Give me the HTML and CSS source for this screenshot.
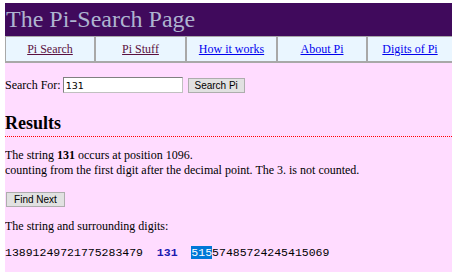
FILE: index.html
```html
<!DOCTYPE html>
<html lang="en">
<head>
  <meta charset="UTF-8">
  <title>The Pi-Search Page</title>
  <link rel="stylesheet" href="styles.css">
</head>
<body>
  <div class="page">
    <div class="header">The Pi-Search Page</div>

    <div class="nav">
      <div class="nav-cell"><a href="#" class="visited">Pi Search</a></div>
      <div class="nav-cell"><a href="#" class="visited">Pi Stuff</a></div>
      <div class="nav-cell"><a href="#">How it works</a></div>
      <div class="nav-cell"><a href="#">About Pi</a></div>
      <div class="nav-cell"><a href="#">Digits of Pi</a></div>
    </div>

    <form class="search-form">
      <label for="searchInput">Search For:</label>
      <input type="text" id="searchInput" value="131">
      <button type="submit">Search Pi</button>
    </form>

    <h3 class="results-title">Results</h3>

    <p class="result-text">
      The string <b>131</b> occurs at position 1096.<br>
      counting from the first digit after the decimal point. The 3. is not counted.
    </p>

    <div class="next-row">
      <button type="button">Find Next</button>
    </div>

    <p class="surround-label">The string and surrounding digits:</p>

    <pre class="digits">13891249721775283479  <span class="match">131</span>  <span class="sel">515</span>57485724245415069</pre>
  </div>
</body>
</html>
```

FILE: styles.css
```css
html {
  background: white;
}
body {
  margin: 3px 0 0 5px;
  font-family: "Liberation Serif", "Times New Roman", serif;
  font-size: 12px;
  color: #000;
}
.page {
  background: #ffdcff;
  min-height: 280px;
}
.header {
  background: #400a5c;
  color: #aeb4d0;
  font-size: 24px;
  height: 33px;
  line-height: 32px;
  padding-left: 1px;
}
.nav {
  display: grid;
  grid-template-columns: 90px 91px 91px 90px 1fr;
  background: #eaf6ff;
  border-top: 1px solid #a8a8a8;
  border-left: 1px solid #a8a8a8;
  border-bottom: 2px solid #a8a8a8;
}
.nav-cell {
  text-align: center;
  height: 24px;
  line-height: 24px;
  border-right: 2px solid #a8a8a8;
}
.nav-cell:last-child {
  border-right: none;
}
.nav a {
  color: #0000ee;
}
.nav a.visited {
  color: #5a1040;
}
.search-form {
  display: flex;
  align-items: center;
  margin: 14px 0 0;
  height: 16px;
}
.search-form label {
  margin-right: 2px;
}
.search-form input {
  width: 120px;
  height: 16px;
  box-sizing: border-box;
  border: 1px solid #808080;
  border-right-color: #c0c0c0;
  border-bottom-color: #c0c0c0;
  padding: 0 2px;
  font-family: "DejaVu Sans", Verdana, sans-serif;
  font-size: 9.5px;
  margin: 0 5px 0 0;
}
button {
  font-family: "Liberation Sans", Arial, sans-serif;
  font-size: 10px;
  background: #e1e1e1;
  border: 1px solid #adadad;
  height: 15px;
  padding: 0;
  color: #000;
}
.search-form button {
  width: 57px;
}
.results-title {
  font-size: 18px;
  margin: 20px 0 0;
  line-height: 21px;
  border-bottom: 1px dotted #ff0000;
  padding-bottom: 2px;
}
.result-text {
  margin: 11px 0 0;
  line-height: 15px;
}
.next-row {
  margin-top: 14px;
  padding-left: 1px;
}
.next-row button {
  width: 59px;
}
.surround-label {
  margin: 12px 0 0;
  line-height: 15px;
}
.digits {
  margin: 12px 0 0;
  font-family: "Liberation Mono", "Courier New", monospace;
  font-size: 11.5px;
  line-height: 14px;
  color: #000;
}
.digits .match {
  color: #1a1ab0;
  font-weight: bold;
}
.digits .sel {
  background: #0078d7;
  color: #fff;
}
```
